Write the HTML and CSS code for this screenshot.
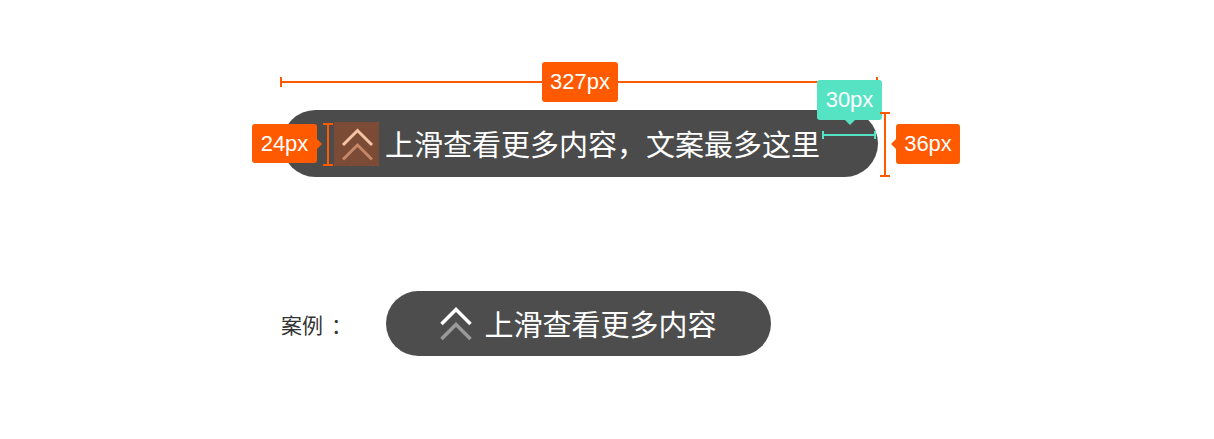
FILE: index.html
```html
<!DOCTYPE html>
<html lang="zh-CN">
<head>
  <meta charset="UTF-8">
  <meta name="viewport" content="width=device-width, initial-scale=1.0">
  <title>上滑提示 规范</title>
  <link rel="stylesheet" href="styles.css">
</head>
<body>
  <div class="page">
    <!-- spec with measurements -->
    <div class="spec">
      <div class="dim-width"></div>
      <div class="tag tag-width">327px</div>

      <div class="pill pill-spec">
        <span class="icon-box">
          <svg width="45" height="44" viewBox="0 0 45 44">
            <polyline points="9,23 23.5,8.5 38,23" fill="none" stroke="#f6c3a4" stroke-width="3"/>
            <polyline points="9,37.5 23.5,23 38,37.5" fill="none" stroke="#c48869" stroke-width="3"/>
          </svg>
        </span>
        <span class="pill-text">上滑查看更多内容，文案最多这里</span>
      </div>

      <div class="tag tag-icon">24px</div>
      <div class="dim-icon"></div>

      <div class="tag tag-pad">30px</div>
      <div class="dim-pad"></div>

      <div class="dim-height"></div>
      <div class="tag tag-height">36px</div>
    </div>

    <!-- example -->
    <div class="example">
      <span class="example-label">案例<span class="colon">：</span></span>
      <div class="pill pill-demo">
        <svg width="32" height="34" viewBox="0 0 32 34">
          <polyline points="1.5,17 16,2.5 30.5,17" fill="none" stroke="#ffffff" stroke-width="3.5"/>
          <polyline points="1.5,32 16,17.5 30.5,32" fill="none" stroke="#9a9a9a" stroke-width="3.5"/>
        </svg>
        <span class="pill-text">上滑查看更多内容</span>
      </div>
    </div>
  </div>
</body>
</html>
```

FILE: styles.css
```css
html,
body {
  margin: 0;
  padding: 0;
  background-color: #fff;
}

body {
  font-family: "Noto Sans CJK SC", "Noto Sans", sans-serif;
}

.page {
  padding-top: 110px;
}

/* Pill shared styles */
.pill {
  display: flex;
  align-items: center;
  background-color: #4b4b4b;
  color: #fff;
  box-sizing: border-box;
}

.pill-text {
  font-size: 29px;
  line-height: 1;
  white-space: nowrap;
}

/* Spec block */
.spec {
  position: relative;
  margin-left: 282px;
  width: 596px;
}

.pill-spec {
  height: 67px;
  border-radius: 34px;
  padding-left: 52px;
  gap: 6px;
}

.icon-box {
  display: block;
  width: 45px;
  height: 44px;
  background-color: #7c4b35;
}

.icon-box svg {
  display: block;
}

/* Annotation tags */
.tag {
  position: absolute;
  display: flex;
  align-items: center;
  justify-content: center;
  height: 40px;
  border-radius: 3px;
  background-color: #ff5a00;
  color: #fff;
  font-family: "Liberation Sans", Arial, sans-serif;
  font-size: 22px;
}

.tag-width {
  left: 260px;
  top: -48px;
  width: 76px;
}

.tag-icon {
  left: -30px;
  top: 14px;
  width: 65px;
  height: 39px;
}

.tag-icon::after {
  content: "";
  position: absolute;
  right: -5px;
  top: 15px;
  border-top: 5px solid transparent;
  border-bottom: 5px solid transparent;
  border-left: 5px solid #ff5a00;
}

.tag-height {
  left: 614px;
  top: 14px;
  width: 64px;
}

.tag-height::before {
  content: "";
  position: absolute;
  left: -5px;
  top: 15px;
  border-top: 5px solid transparent;
  border-bottom: 5px solid transparent;
  border-right: 5px solid #ff5a00;
}

.tag-pad {
  left: 535px;
  top: -30px;
  width: 65px;
  background-color: #55e3c3;
}

.tag-pad::after {
  content: "";
  position: absolute;
  left: 28px;
  bottom: -5px;
  border-left: 5px solid transparent;
  border-right: 5px solid transparent;
  border-top: 5px solid #55e3c3;
}

/* Dimension lines */
.dim-width {
  position: absolute;
  left: -2px;
  top: -29px;
  width: 598px;
  height: 2px;
  background-color: #ff5a00;
}

.dim-width::before,
.dim-width::after {
  content: "";
  position: absolute;
  top: -4px;
  width: 2px;
  height: 10px;
  background-color: #ff5a00;
}

.dim-width::before {
  left: 0;
}

.dim-width::after {
  right: 0;
}

.dim-icon,
.dim-height {
  position: absolute;
  width: 2px;
  background-color: #ff5a00;
}

.dim-icon {
  left: 45px;
  top: 13px;
  height: 43px;
}

.dim-height {
  left: 602px;
  top: 2px;
  height: 65px;
}

.dim-icon::before,
.dim-icon::after,
.dim-height::before,
.dim-height::after {
  content: "";
  position: absolute;
  left: -4px;
  width: 10px;
  height: 2px;
  background-color: #ff5a00;
}

.dim-icon::before,
.dim-height::before {
  top: 0;
}

.dim-icon::after,
.dim-height::after {
  bottom: 0;
}

.dim-pad {
  position: absolute;
  left: 540px;
  top: 24px;
  width: 54px;
  height: 2px;
  background-color: #55e3c3;
}

.dim-pad::before,
.dim-pad::after {
  content: "";
  position: absolute;
  top: -3px;
  width: 2px;
  height: 8px;
  background-color: #55e3c3;
}

.dim-pad::before {
  left: 0;
}

.dim-pad::after {
  right: 0;
}

/* Example row */
.example {
  display: flex;
  align-items: center;
  margin-top: 114px;
  margin-left: 281px;
}

.example-label {
  width: 105px;
  font-size: 21px;
  color: #333;
}

.example-label .colon {
  margin-left: 8px;
}

.pill-demo {
  width: 385px;
  height: 65px;
  border-radius: 33px;
  justify-content: center;
  gap: 12px;
  background-color: #4d4d4d;
}

.pill-demo svg {
  display: block;
}
```
